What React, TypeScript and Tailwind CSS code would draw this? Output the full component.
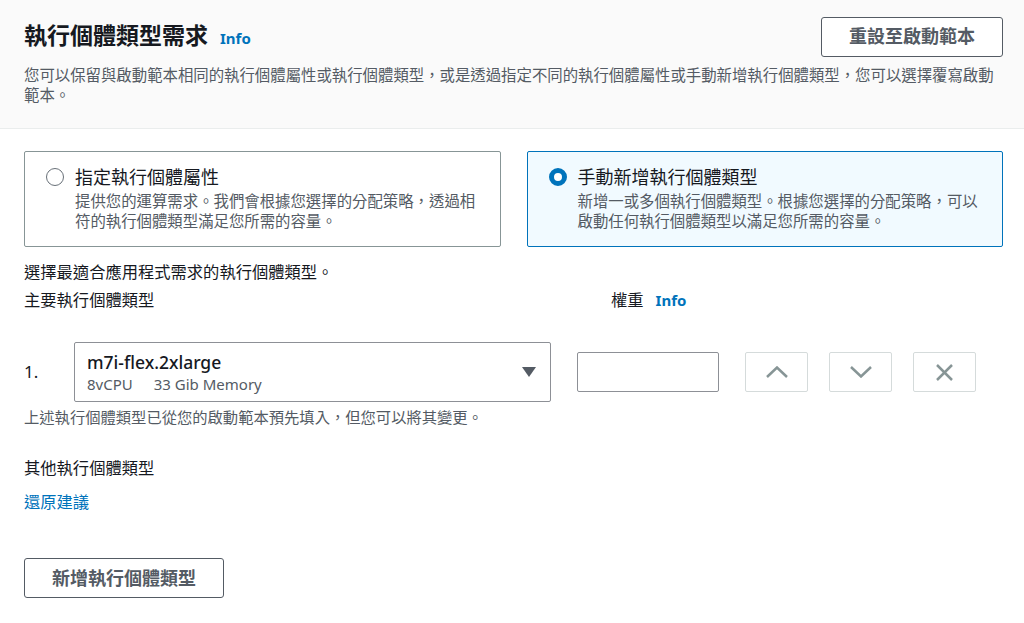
import { useState } from 'react'

const font = { fontFamily: '"Noto Sans", "Noto Sans CJK TC", sans-serif' }

function Radio({ checked }: { checked: boolean }) {
  return checked ? (
    <span className="mt-[3px] h-[18px] w-[18px] shrink-0 rounded-full border-[5px] border-[#0073bb] bg-white" />
  ) : (
    <span className="mt-[3px] h-[18px] w-[18px] shrink-0 rounded-full border-[1.5px] border-[#687078] bg-white" />
  )
}

function IconButton({ children }: { children: React.ReactNode }) {
  return (
    <button className="flex h-10 w-[63px] items-center justify-center rounded-[2px] border border-[#d5dbdb] bg-white text-[#879596]">
      {children}
    </button>
  )
}

export default function App() {
  const [modo, setModo] = useState<'atributos' | 'manual'>('manual')

  const cards = [
    {
      id: 'atributos' as const,
      titulo: '指定執行個體屬性',
      desc: '提供您的運算需求。我們會根據您選擇的分配策略，透過相符的執行個體類型滿足您所需的容量。',
    },
    {
      id: 'manual' as const,
      titulo: '手動新增執行個體類型',
      desc: '新增一或多個執行個體類型。根據您選擇的分配策略，可以啟動任何執行個體類型以滿足您所需的容量。',
    },
  ]

  return (
    <div className="h-[623px] w-full overflow-hidden bg-white text-[#16191f]" style={font}>
      {/* header */}
      <div className="h-[129px] border-b border-[#eaeded] bg-[#fafafa] pl-6 pr-[21px] pt-[15px]">
        <div className="flex items-center justify-between">
          <h2 className="flex items-baseline gap-3 text-[23px] font-bold leading-[40px]">
            執行個體類型需求
            <a className="text-[15px] font-bold text-[#0073bb]">Info</a>
          </h2>
          <button className="h-10 w-[182px] rounded-[3px] border border-[#545b64] bg-white text-[18px] font-bold text-[#545b64]">
            重設至啟動範本
          </button>
        </div>
        <p className="mt-2 w-[976px] text-[15.4px] leading-5 text-[#545b64]">
          您可以保留與啟動範本相同的執行個體屬性或執行個體類型，或是透過指定不同的執行個體屬性或手動新增執行個體類型，您可以選擇覆寫啟動範本。
        </p>
      </div>

      <div className="pl-6 pr-[21px]">
        {/* options */}
        <div className="mt-[22px] grid grid-cols-2 gap-[26px]">
          {cards.map(c => {
            const sel = modo === c.id
            return (
              <div
                key={c.id}
                onClick={() => setModo(c.id)}
                className={
                  sel
                    ? 'flex h-24 gap-[11px] rounded-[2px] border border-[#0073bb] bg-[#f1faff] pl-[21px] pr-4 pt-[13px]'
                    : 'flex h-24 gap-[11px] rounded-[2px] border border-[#879596] bg-white pl-[21px] pr-4 pt-[13px]'
                }
              >
                <Radio checked={sel} />
                <div>
                  <div className="text-[18px] leading-6">{c.titulo}</div>
                  <div className="mt-[3px] w-[405px] text-[15.4px] leading-5 text-[#545b64]">{c.desc}</div>
                </div>
              </div>
            )
          })}
        </div>

        <p className="mt-[11px] text-[16.3px] leading-7">選擇最適合應用程式需求的執行個體類型。</p>
        <div className="flex text-[16.3px] leading-7">
          <span className="w-[587px]">主要執行個體類型</span>
          <span className="flex items-baseline gap-3">
            權重
            <a className="text-[15px] font-bold text-[#0073bb]">Info</a>
          </span>
        </div>

        {/* row */}
        <div className="mt-7 flex items-center">
          <span className="w-[50px] text-[17px]">1.</span>
          <div className="flex h-[60px] w-[477px] items-center justify-between rounded-[2px] border border-[#8d9096] pl-3 pr-[14px]">
            <div>
              <div className="text-[17.5px] font-medium leading-6">m7i-flex.2xlarge</div>
              <div className="flex gap-[21px] text-[15px] leading-5 text-[#545b64]">
                <span>8vCPU</span>
                <span>33 Gib Memory</span>
              </div>
            </div>
            <svg width="14" height="10" viewBox="0 0 14 10">
              <polygon points="0,0 14,0 7,10" fill="#545b64" />
            </svg>
          </div>
          <input className="ml-[26px] h-10 w-[142px] rounded-[2px] border border-[#8d9096] bg-white outline-none" />
          <div className="ml-[26px] flex gap-[21px]">
            <IconButton>
              <svg width="22" height="12" viewBox="0 0 22 12" fill="none" stroke="currentColor" strokeWidth="2.5">
                <polyline points="1,11 11,1.5 21,11" />
              </svg>
            </IconButton>
            <IconButton>
              <svg width="22" height="12" viewBox="0 0 22 12" fill="none" stroke="currentColor" strokeWidth="2.5">
                <polyline points="1,1 11,10.5 21,1" />
              </svg>
            </IconButton>
            <IconButton>
              <svg width="17" height="17" viewBox="0 0 17 17" fill="none" stroke="currentColor" strokeWidth="2.5">
                <line x1="1" y1="1" x2="16" y2="16" />
                <line x1="16" y1="1" x2="1" y2="16" />
              </svg>
            </IconButton>
          </div>
        </div>
        <p className="mt-[5px] text-[15.3px] leading-5 text-[#545b64]">
          上述執行個體類型已從您的啟動範本預先填入，但您可以將其變更。
        </p>

        <p className="mt-[29px] text-[16.3px] leading-6">其他執行個體類型</p>
        <a className="mt-[10px] block text-[16.3px] leading-6 text-[#0073bb]">還原建議</a>

        <button className="mt-[44px] h-10 w-[200px] rounded-[3px] border border-[#545b64] bg-white text-[18px] font-bold text-[#545b64]">
          新增執行個體類型
        </button>
      </div>
    </div>
  )
}
